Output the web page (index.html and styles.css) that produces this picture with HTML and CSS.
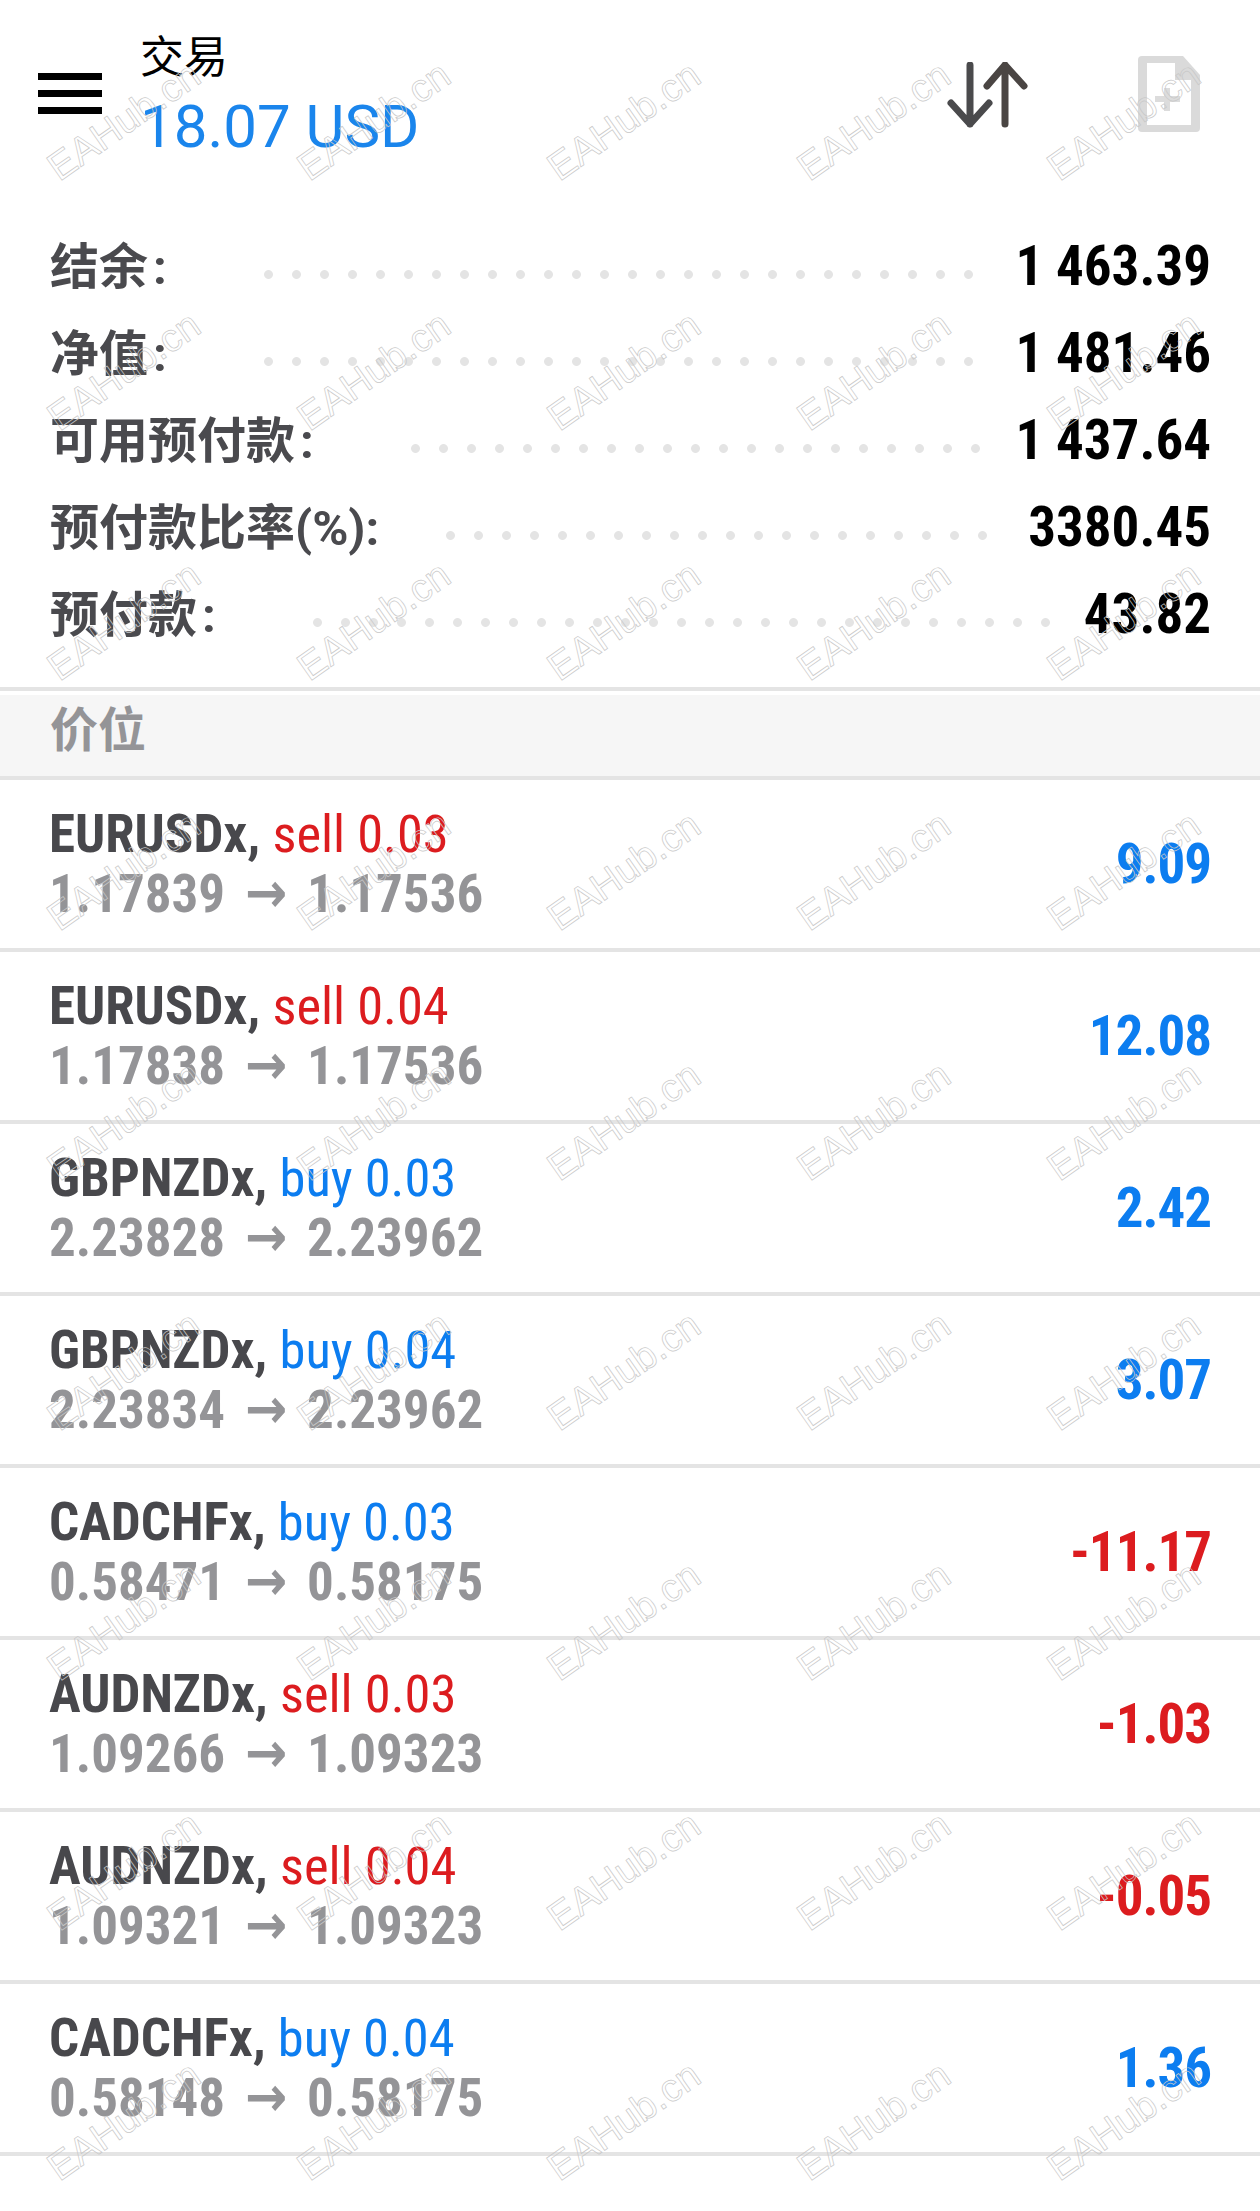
FILE: index.html
```html
<!DOCTYPE html>
<html lang="zh-CN">
<head>
<meta charset="utf-8">
<title>交易</title>
<link rel="stylesheet" href="styles.css">
</head>
<body>
<div class="page">
  <header class="topbar">
    <div class="burger"><i></i><i></i><i></i></div>
    <div class="title">
      <div class="title-label">交易</div>
      <div class="title-profit">18.07 USD</div>
    </div>
    <svg class="icon-sort" viewBox="0 0 84 72" width="84" height="72"><path d="M24 3V62M5 41L24 62L43 41" fill="none" stroke="#4a4a4c" stroke-width="7" stroke-linecap="round" stroke-linejoin="round"/><path d="M59 62V3M41 24L59 3L78 24" fill="none" stroke="#4a4543" stroke-width="7" stroke-linecap="round" stroke-linejoin="round"/></svg>
    <svg class="icon-file" viewBox="0 0 64 78" width="64" height="78"><path d="M5 1H46L63 20V73Q63 77 59 77H5Q1 77 1 73V5Q1 1 5 1Z" fill="#dadada"/><path d="M10 8H38V25H54V70H10Z" fill="#fff"/><path d="M30 33V56M18 44H43" stroke="#dcdcdc" stroke-width="6" fill="none"/></svg>
  </header>

  <section class="summary">
    <div class="line"><span class="k">结余<span class="c">:</span></span><span class="dots"></span><span class="v">1 463.39</span></div>
    <div class="line"><span class="k">净值<span class="c">:</span></span><span class="dots"></span><span class="v">1 481.46</span></div>
    <div class="line"><span class="k">可用预付款<span class="c">:</span></span><span class="dots"></span><span class="v">1 437.64</span></div>
    <div class="line"><span class="k">预付款比率(%):</span><span class="dots dots-short"></span><span class="v">3380.45</span></div>
    <div class="line"><span class="k">预付款<span class="c">:</span></span><span class="dots"></span><span class="v">43.82</span></div>
  </section>

  <div class="band">价位</div>

  <section class="trades">
    <div class="trade"><div class="info"><div class="l1"><b>EURUSDx,</b> <span class="side red">sell 0.03</span></div><div class="l2">1.17839<span class="arr">→</span>1.17536</div></div><div class="pnl blue">9.09</div></div>
    <div class="trade"><div class="info"><div class="l1"><b>EURUSDx,</b> <span class="side red">sell 0.04</span></div><div class="l2">1.17838<span class="arr">→</span>1.17536</div></div><div class="pnl blue">12.08</div></div>
    <div class="trade"><div class="info"><div class="l1"><b>GBPNZDx,</b> <span class="side blue">buy 0.03</span></div><div class="l2">2.23828<span class="arr">→</span>2.23962</div></div><div class="pnl blue">2.42</div></div>
    <div class="trade"><div class="info"><div class="l1"><b>GBPNZDx,</b> <span class="side blue">buy 0.04</span></div><div class="l2">2.23834<span class="arr">→</span>2.23962</div></div><div class="pnl blue">3.07</div></div>
    <div class="trade"><div class="info"><div class="l1"><b>CADCHFx,</b> <span class="side blue">buy 0.03</span></div><div class="l2">0.58471<span class="arr">→</span>0.58175</div></div><div class="pnl red">-11.17</div></div>
    <div class="trade"><div class="info"><div class="l1"><b>AUDNZDx,</b> <span class="side red">sell 0.03</span></div><div class="l2">1.09266<span class="arr">→</span>1.09323</div></div><div class="pnl red">-1.03</div></div>
    <div class="trade"><div class="info"><div class="l1"><b>AUDNZDx,</b> <span class="side red">sell 0.04</span></div><div class="l2">1.09321<span class="arr">→</span>1.09323</div></div><div class="pnl red">-0.05</div></div>
    <div class="trade"><div class="info"><div class="l1"><b>CADCHFx,</b> <span class="side blue">buy 0.04</span></div><div class="l2">0.58148<span class="arr">→</span>0.58175</div></div><div class="pnl blue">1.36</div></div>
  </section>

  <div class="marks" aria-hidden="true">
    <span>EAHub.cn</span><span>EAHub.cn</span><span>EAHub.cn</span><span>EAHub.cn</span><span>EAHub.cn</span>
    <span>EAHub.cn</span><span>EAHub.cn</span><span>EAHub.cn</span><span>EAHub.cn</span><span>EAHub.cn</span>
    <span>EAHub.cn</span><span>EAHub.cn</span><span>EAHub.cn</span><span>EAHub.cn</span><span>EAHub.cn</span>
    <span>EAHub.cn</span><span>EAHub.cn</span><span>EAHub.cn</span><span>EAHub.cn</span><span>EAHub.cn</span>
    <span>EAHub.cn</span><span>EAHub.cn</span><span>EAHub.cn</span><span>EAHub.cn</span><span>EAHub.cn</span>
    <span>EAHub.cn</span><span>EAHub.cn</span><span>EAHub.cn</span><span>EAHub.cn</span><span>EAHub.cn</span>
    <span>EAHub.cn</span><span>EAHub.cn</span><span>EAHub.cn</span><span>EAHub.cn</span><span>EAHub.cn</span>
    <span>EAHub.cn</span><span>EAHub.cn</span><span>EAHub.cn</span><span>EAHub.cn</span><span>EAHub.cn</span>
    <span>EAHub.cn</span><span>EAHub.cn</span><span>EAHub.cn</span><span>EAHub.cn</span><span>EAHub.cn</span>
  </div>
</div>
</body>
</html>
```
FILE: styles.css
```css
* { box-sizing: border-box; }
html, body { margin: 0; padding: 0; background: #fff; }
body { font-family: Roboto, "Noto Sans CJK SC", sans-serif; }
.page { position: relative; width: 1260px; height: 2211px; overflow: hidden; background: #fff; }

.topbar { height: 222px; display: flex; align-items: flex-start; padding-left: 38px; }
.burger { width: 64px; margin-top: 73px; display: flex; flex-direction: column; gap: 10px; }
.burger i { display: block; height: 7px; background: #000; }
.title { margin-left: 38px; margin-top: 29px; width: 760px; flex: none; }
.title-label { font-size: 44px; line-height: 58px; color: #000; }
.title-profit { font-size: 60px; line-height: 80px; color: #1a85ec; }
.icon-sort { margin-left: 46px; margin-top: 62px; flex: none; }
.icon-file { margin-left: 107px; margin-top: 55px; flex: none; }

.summary { height: 469px; padding: 0 49px 0 50px; border-bottom: 4px solid #e4e4e4; }
.line { height: 87px; display: flex; align-items: center; }
.k { font-size: 49px; font-weight: 700; font-stretch: 90%; padding-bottom: 6px; color: #4a4a4e; white-space: nowrap; }
.c { margin-left: 5px; }
.v { font-size: 55px; font-weight: 700; font-stretch: 75%; color: #000; white-space: nowrap; }
.dots { flex: 1; height: 9px; margin: 17px 34px 0 97px; background-image: radial-gradient(circle at 4.5px 4.5px, #e4e4e4 4px, transparent 4.8px); background-size: 28px 9px; background-repeat: repeat-x; }
.dots-short { margin-left: 67px; }

.band { margin-top: 4px; height: 85px; padding: 0 50px; background: #f6f6f6; border-bottom: 4px solid #e4e4e4; font-size: 48px; font-weight: 700; line-height: 71px; color: #949497; }

.trade { height: 172px; padding: 0 49px 0 49px; border-bottom: 4px solid #e4e4e4; display: flex; align-items: center; justify-content: space-between; }
.l1 { font-size: 53px; line-height: 60px; font-stretch: 75%; white-space: nowrap; }
.l1 b { font-weight: 700; color: #48484c; }
.side { font-size: 52.5px; }
.l2 { font-size: 53px; line-height: 61px; font-weight: 700; font-stretch: 75%; color: #949497; white-space: nowrap; }
.arr { display: inline-block; width: 82px; line-height: 0; text-align: center; font-family: "DejaVu Sans", sans-serif; font-size: 56px; font-weight: 700; }
.pnl { font-size: 55px; font-weight: 700; font-stretch: 75%; letter-spacing: -1px; white-space: nowrap; }
.red { color: #dc1c1f; }
.blue { color: #0c7df0; }

.marks { position: absolute; top: -4px; left: -1px; display: grid; grid-template-columns: repeat(5, 250px); grid-auto-rows: 250px; place-items: center; pointer-events: none; }
.marks span { font-family: "Liberation Sans", sans-serif; font-size: 39px; color: transparent; -webkit-text-stroke: 0.7px #c8c8c8; transform: rotate(-35deg); white-space: nowrap; }
```
